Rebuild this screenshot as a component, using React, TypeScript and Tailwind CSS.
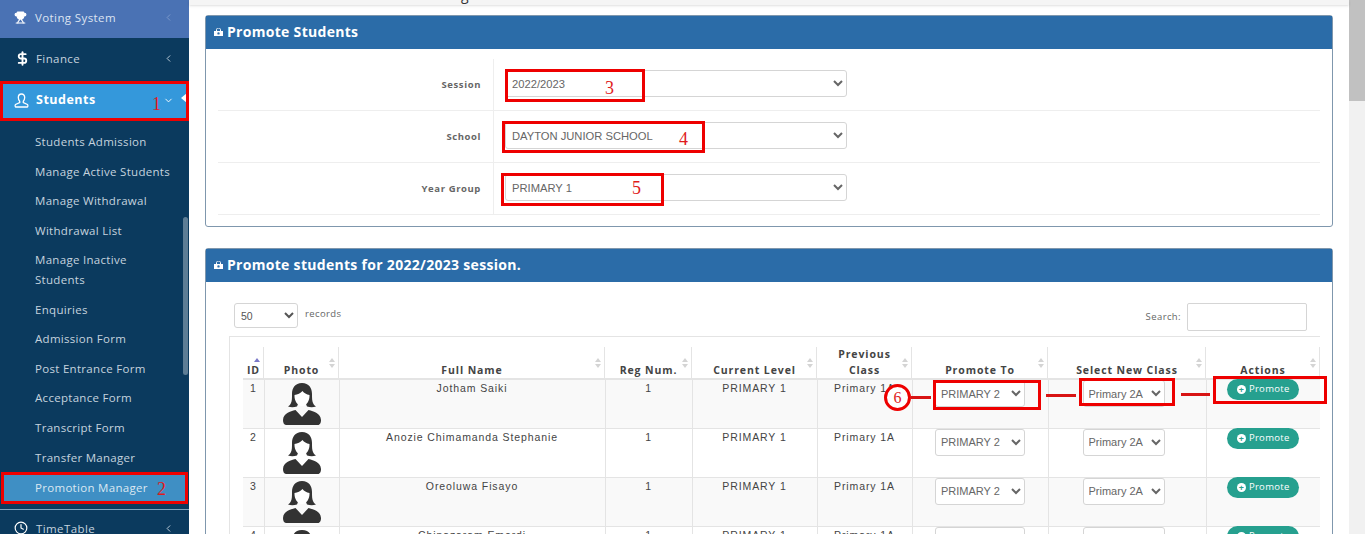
import React from 'react'
import { ChevronDown, ChevronLeft, Clock, DollarSign, Trophy } from 'lucide-react'

const subItems = [
  'Students Admission',
  'Manage Active Students',
  'Manage Withdrawal',
  'Withdrawal List',
  'Manage Inactive\nStudents',
  'Enquiries',
  'Admission Form',
  'Post Entrance Form',
  'Acceptance Form',
  'Transcript Form',
  'Transfer Manager',
]

const students = [
  { id: 1, name: 'Jotham Saiki', prev: 'Primary 1A' },
  { id: 2, name: 'Anozie Chimamanda Stephanie', prev: 'Primary 1A' },
  { id: 3, name: 'Oreoluwa Fisayo', prev: 'Primary 1A' },
  { id: 4, name: 'Chinazaram Emordi', prev: 'Primary 1A' },
]

const sans = 'font-["Open_Sans",sans-serif]'
const arial = 'font-["Liberation_Sans",sans-serif]'

function Avatar() {
  return (
    <svg width="40" height="42" viewBox="0 0 40 42" className="mx-auto block">
      <path
        d="M20 0C13 0 10 5 10 11c0 4 0 7-1 9-.6 1.500-1.500 2.500-3 3.500 2.500 1 6 1 9 0l1-2.500h8l1 2.500c3 1 6.500 1 9 0-1.500-1-2.400-2-3-3.500-1-2-1-5-1-9C30 5 27 0 20 0z"
        fill="#333"
      />
      <path d="M12.500 12c3-.5 6-1.800 8-4 1.500 2 4 3.400 7 4 .3 6-3 11-7.500 11s-7.800-5-7.500-11z" fill="#fff" />
      <path
        d="M13.500 27C8 28.500 1.500 30 1 37c-.1 2.500 1 5 3 5h32c2 0 3.100-2.500 3-5-.5-7-7-8.500-12.500-10L20 34z"
        fill="#333"
      />
    </svg>
  )
}

function PanelIcon() {
  return (
    <svg width="9" height="8" viewBox="0 0 9 8">
      <path d="M2.500 3V1.500C2.500.7 3.200 0 4.500 0s2 .7 2 1.500V3" fill="none" stroke="#fff" strokeWidth="1" />
      <path d="M0 3h9v5H0zM4.500 4.200a1.200 1.200 0 1 0 0 2.400 1.200 1.200 0 0 0 0-2.400z" fill="#fff" fillRule="evenodd" />
    </svg>
  )
}

function StudentIcon() {
  return (
    <svg width="15" height="15" viewBox="0 0 15 15" fill="none" stroke="#fff" strokeWidth="1.300">
      <path d="M7.500 1C5.500 1 4.300 2.500 4.300 4.600c0 1.600.6 2.800 1.400 3.600v1.300L1.500 11.500c-.5.3-.5 2.500 0 2.500h12c.5 0 .5-2.200 0-2.500L9.300 9.500V8.200c.8-.8 1.400-2 1.400-3.600C10.700 2.500 9.500 1 7.500 1z" />
    </svg>
  )
}

function SortArrows({ active }: { active?: boolean }) {
  return (
    <span className="absolute right-[4px] top-[21px] flex flex-col gap-[2px]">
      <span className={`h-0 w-0 border-x-[3px] border-b-[4px] border-x-transparent ${active ? 'border-b-[#7a78c8]' : 'border-b-[#d4d4d4]'}`} />
      {!active && <span className="h-0 w-0 border-x-[3px] border-t-[4px] border-x-transparent border-t-[#d4d4d4]" />}
    </span>
  )
}

function FormRow({ label, value }: { label: string; value: string }) {
  return (
    <div className="flex h-[52px] border-b border-[#eeeeee]">
      <div className="w-[275px] pr-[12px] pt-[19px] text-right text-[9.500px] font-bold tracking-[0.6px] text-[#666]">
        {label}
      </div>
      <div className="border-l border-[#eeeeee] pl-[11px] pt-[11px]">
        <select
          defaultValue={value}
          className={`${arial} h-[27px] w-[342px] rounded-[3px] border border-[#d5d5d5] bg-white pl-[2px] pt-px text-[11.200px] text-[#666]`}
        >
          <option>{value}</option>
        </select>
      </div>
    </div>
  )
}

function Th({ children, width, active }: { children: React.ReactNode; width: number; active?: boolean }) {
  return (
    <th
      style={{ width }}
      className="relative align-bottom text-[10.500px] font-bold leading-[16px] tracking-[0.9px] text-[#444]"
    >
      {children}
      <SortArrows active={active} />
      <span className="absolute bottom-0 right-0 top-[10px] w-px bg-[#e4e4e4]" />
    </th>
  )
}

function Select({ value, width }: { value: string; width: number }) {
  return (
    <select
      defaultValue={value}
      style={{ width }}
      className={`${arial} h-[27px] rounded-[3px] border border-[#d5d5d5] bg-white pl-px text-[11px] font-normal tracking-normal text-[#666]`}
    >
      <option>{value}</option>
    </select>
  )
}

function Note({ className, children }: { className: string; children: React.ReactNode }) {
  return <span className={`absolute font-["Liberation_Serif",serif] text-[18px] leading-none text-[#e01b1b] ${className}`}>{children}</span>
}

function RedBox({ className }: { className: string }) {
  return <div className={`pointer-events-none absolute border-[3px] border-[#ee0000] ${className}`} />
}

export default function App() {
  return (
    <div className={`${sans} relative flex h-[534px] w-[1365px] overflow-hidden bg-white`}>
      {/* sidebar */}
      <aside className="relative h-full w-[189px] shrink-0 overflow-hidden bg-[#0b3a5e] text-[#c5d3de]">
        <div className="flex h-[38px] items-center bg-[#4a72b4] pb-[3px] pl-[14px] pr-[15px] text-[11.500px] tracking-[0.4px] text-[#dce4f2]">
          <Trophy size={13} fill="#fff" color="#fff" />
          <span className="ml-[8px] flex-1">Voting System</span>
          <ChevronLeft size={11} className="text-[#7f9bcb]" />
        </div>
        <div className="flex h-[41px] items-center pl-[15px] pr-[15px] text-[11.500px] tracking-[0.4px]">
          <DollarSign size={15} strokeWidth={3} className="text-white" />
          <span className="ml-[6px] flex-1">Finance</span>
          <ChevronLeft size={11} />
        </div>
        <div className="relative mx-[2px] mt-[3px] flex h-[37px] items-center bg-[#3498db] pl-[12px] pr-[10px] text-[12.500px] font-bold tracking-[0.5px] text-white">
          <StudentIcon />
          <span className="ml-[7px] flex-1">Students</span>
          <ChevronDown size={11} className="mr-[3px]" />
          <span className="absolute right-0 top-[11px] h-0 w-0 border-y-[5px] border-r-[6px] border-y-transparent border-r-white" />
        </div>
        <ul className="mt-[8px] text-[11.500px] leading-[19.600px] tracking-[0.3px]">
          {subItems.map((item) => (
            <li key={item} className="whitespace-pre py-[5px] pl-[35px]">
              {item}
            </li>
          ))}
        </ul>
        <div className="mx-[4px] flex h-[30px] items-center bg-[#3f8fc4] pl-[31px] text-[11.500px] tracking-[0.3px] text-[#dbe8f2]">
          Promotion Manager
        </div>
        <div className="mt-[7px] h-[1px] bg-[#7fa3bd]" />
        <div className="flex h-[36px] items-center pl-[14px] pr-[15px] text-[11.500px] tracking-[0.4px]">
          <Clock size={14} className="text-white" />
          <span className="ml-[8px] flex-1">TimeTable</span>
          <ChevronLeft size={11} />
        </div>
        <div className="absolute right-[1px] top-[217px] h-[158px] w-[5px] rounded bg-[#5d7d95]" />
      </aside>

      {/* main */}
      <main className="relative min-w-0 flex-1">
        <div className="relative h-[5px] overflow-hidden bg-[#f5f5f5] shadow-sm">
          <span className="absolute left-[272px] top-[-14px] text-[14px] leading-[18px] text-[#333]">g</span>
        </div>
        <div className="pl-[16px] pr-[16px] pt-[10px]">
          <section className="h-[212px] rounded-[3px] border border-[#7f97ad] bg-white">
            <h2 className="flex h-[33px] items-center gap-[4px] bg-[#2b6ca8] pb-[2px] pl-[8px] text-[14px] font-bold tracking-[0.3px] text-white">
              <PanelIcon />
              Promote Students
            </h2>
            <div className="mx-[12px] mt-[10px]">
              <FormRow label="Session" value="2022/2023" />
              <FormRow label="School" value="DAYTON JUNIOR SCHOOL" />
              <FormRow label="Year Group" value="PRIMARY 1" />
            </div>
          </section>

          <section className="mt-[21px] rounded-[3px] border border-[#7f97ad] bg-white">
            <h2 className="flex h-[33px] items-center gap-[4px] bg-[#2b6ca8] pb-[2px] pl-[8px] text-[14px] font-bold tracking-[0.3px] text-white">
              <PanelIcon />
              Promote students for 2022/2023 session.
            </h2>
            <div className="pl-[23px] pr-[24px] pt-[21px]">
              <div className="flex h-[33px] items-start justify-between pl-[5px] pr-px">
                <div className="flex items-start">
                  <select className={`${arial} h-[25px] w-[64px] rounded-[3px] border border-[#d5d5d5] bg-white pl-[2px] text-[10.500px] text-[#555]`}>
                    <option>50</option>
                  </select>
                  <span className="ml-[7px] mt-[4px] text-[9.500px] tracking-[0.4px] text-[#666]">records</span>
                </div>
                <div className="flex items-center gap-[6px] text-[9.500px] tracking-[0.4px] text-[#666]">
                  Search:
                  <input className="h-[28px] w-[120px] rounded-[2px] border border-[#d5d5d5]" />
                </div>
              </div>
              <div className="h-[200px] w-[1091px] border-l border-t border-[#e4e4e4] pl-[13px]">
                <table className="w-[1077px] table-fixed border-collapse">
                  <thead>
                    <tr className="h-[42px] border-b-2 border-[#e4e4e4]">
                      <Th width={21} active>ID</Th>
                      <Th width={75}>Photo</Th>
                      <Th width={266}>Full Name</Th>
                      <Th width={87}>Reg Num.</Th>
                      <Th width={125}>Current Level</Th>
                      <Th width={95}>Previous<br />Class</Th>
                      <Th width={136}>Promote To</Th>
                      <Th width={158}>Select New Class</Th>
                      <Th width={114}>Actions</Th>
                    </tr>
                  </thead>
                  <tbody className={`${arial} text-center text-[10.500px] tracking-[0.9px] text-[#444]`}>
                    {students.map((s, i) => (
                      <tr key={s.id} className={`h-[49px] border-b border-[#e4e4e4] ${i % 2 === 0 ? 'bg-[#f9f9f9]' : 'bg-white'}`}>
                        <td className="border-r border-[#e4e4e4] pt-px align-top leading-[14px]">{s.id}</td>
                        <td className="border-r border-[#e4e4e4] pt-[3px] align-top"><Avatar /></td>
                        <td className="border-r border-[#e4e4e4] pt-px align-top leading-[14px]">{s.name}</td>
                        <td className="border-r border-[#e4e4e4] pt-px align-top leading-[14px]">1</td>
                        <td className="border-r border-[#e4e4e4] pt-px align-top leading-[14px]">PRIMARY 1</td>
                        <td className="border-r border-[#e4e4e4] pt-px align-top leading-[14px]">{s.prev}</td>
                        <td className="border-r border-[#e4e4e4] align-top"><Select value="PRIMARY 2" width={90} /></td>
                        <td className="border-r border-[#e4e4e4] pr-[7px] align-top"><Select value="Primary 2A" width={82} /></td>
                        <td className="align-top">
                          <button className={`${sans} inline-flex h-[21px] w-[72px] -translate-y-px items-center justify-center gap-[3px] rounded-full bg-[#26a08f] text-[9.500px] tracking-[0.3px] text-white`}>
                            <span className="flex h-[9px] w-[9px] items-center justify-center rounded-full bg-white text-[9px] font-bold leading-none text-[#26a08f]">+</span>
                            Promote
                          </button>
                        </td>
                      </tr>
                    ))}
                  </tbody>
                </table>
              </div>
            </div>
          </section>
        </div>
      </main>

      {/* scrollbar */}
      <div className="w-[16px] shrink-0 bg-[#f1f1f1]">
        <div className="h-[101px] bg-[#c1c1c1]" />
      </div>

      {/* annotations on top of the screenshot */}
      <RedBox className="left-0 top-[81px] h-[40px] w-[189px]" />
      <RedBox className="left-[1px] top-[472px] h-[32px] w-[187px]" />
      <RedBox className="left-[505px] top-[69px] h-[33px] w-[140px]" />
      <RedBox className="left-[502px] top-[121px] h-[32px] w-[203px]" />
      <RedBox className="left-[501px] top-[173px] h-[33px] w-[163px]" />
      <RedBox className="left-[933px] top-[380px] h-[30px] w-[108px]" />
      <RedBox className="left-[1079px] top-[378px] h-[28px] w-[96px]" />
      <RedBox className="left-[1213px] top-[376px] h-[28px] w-[114px]" />
      <Note className="left-[152px] top-[95px]">1</Note>
      <Note className="left-[157px] top-[480px]">2</Note>
      <Note className="left-[605px] top-[79px]">3</Note>
      <Note className="left-[679px] top-[130px]">4</Note>
      <Note className="left-[632px] top-[179px]">5</Note>
      <div className="absolute left-[884px] top-[384px] flex h-[27px] w-[27px] items-center justify-center rounded-full border-[3px] border-[#ee0000] bg-white font-['Liberation_Serif',serif] text-[16px] text-[#e01b1b]">6</div>
      <div className="absolute left-[911px] top-[396px] h-[3px] w-[20px] bg-[#d81414]" />
      <div className="absolute left-[1046px] top-[394px] h-[3px] w-[30px] bg-[#d81414]" />
      <div className="absolute left-[1181px] top-[393px] h-[3px] w-[29px] bg-[#d81414]" />
    </div>
  )
}
